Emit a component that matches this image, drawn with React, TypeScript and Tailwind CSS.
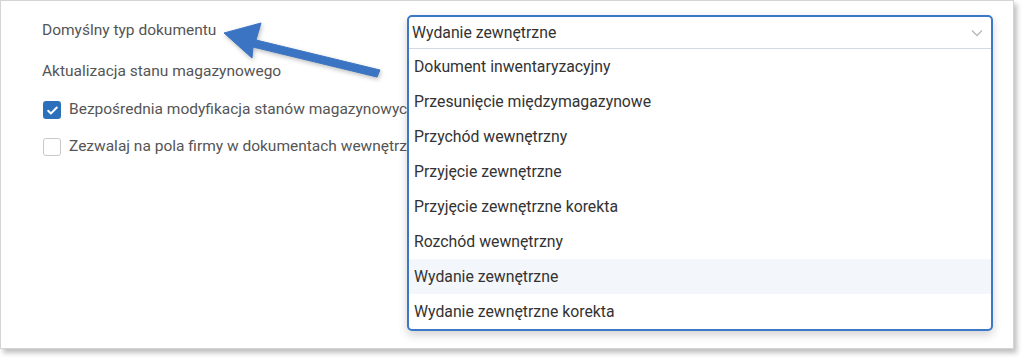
import React from "react";

const options = [
  "Dokument inwentaryzacyjny",
  "Przesunięcie międzymagazynowe",
  "Przychód wewnętrzny",
  "Przyjęcie zewnętrzne",
  "Przyjęcie zewnętrzne korekta",
  "Rozchód wewnętrzny",
  "Wydanie zewnętrzne",
  "Wydanie zewnętrzne korekta",
];

const Checkbox = ({ checked }: { checked?: boolean }) =>
  checked ? (
    <span className="w-[18px] h-[18px] rounded-[3px] bg-[#2c6fbb] flex items-center justify-center shrink-0">
      <svg width="13" height="13" viewBox="0 0 24 24" fill="none" stroke="white" strokeWidth="3.5" strokeLinecap="round" strokeLinejoin="round">
        <path d="M4 12.5l5 5L20 6.5" />
      </svg>
    </span>
  ) : (
    <span className="w-[18px] h-[18px] rounded-[3px] border border-[#c8c8c8] bg-white shrink-0" />
  );

export default function App() {
  return (
    <div className="w-[1024px] h-[358px] bg-white font-['Roboto',sans-serif]">
      <div className="relative w-[1014px] h-[349px] border border-[#d4d4d4] bg-white shadow-[3px_4px_5px_rgba(0,0,0,0.25)] flex pt-[14px]">
        <div className="w-[406px] pl-[41px] pt-[5px] flex flex-col text-[15.5px] text-[#555]">
          <div className="h-[20px] leading-[20px]">Domyślny typ dokumentu</div>
          <div className="h-[20px] leading-[20px] mt-[21px]">Aktualizacja stanu magazynowego</div>
          <div className="flex items-center gap-[8px] mt-[19px] h-[20px] whitespace-nowrap pl-[1px]">
            <Checkbox checked />
            <span>Bezpośrednia modyfikacja stanów magazynowych</span>
          </div>
          <div className="flex items-center gap-[8px] mt-[17px] h-[20px] whitespace-nowrap pl-[1px]">
            <Checkbox />
            <span>Zezwalaj na pola firmy w dokumentach wewnętrznych</span>
          </div>
        </div>

        <div className="relative z-10 w-[586px] h-[316px] border-2 border-[#3b78c8] rounded-[5px] bg-white shadow-[0_4px_10px_rgba(0,0,0,0.18)] flex flex-col overflow-hidden text-[15.8px] text-[#333]">
          <div className="h-[32px] flex items-center justify-between pl-[3px] pr-[8px] border-b border-[#cfd8e3]">
            <span>Wydanie zewnętrzne</span>
            <svg width="12" height="8" viewBox="0 0 12 8" fill="none" stroke="#b8b8b8" strokeWidth="1.3">
              <path d="M1 1.5l5 5 5-5" />
            </svg>
          </div>
          {options.map((o) => (
            <div
              key={o}
              className={`h-[35px] flex items-center pl-[5px] ${o === "Wydanie zewnętrzne" ? "bg-[#f3f6fa]" : ""}`}
            >
              {o}
            </div>
          ))}
        </div>

        <svg className="absolute left-[215px] top-[14px] z-20 drop-shadow-[1px_2px_2px_rgba(0,0,0,0.25)]" width="175" height="70" viewBox="215 14 175 70">
          <polygon
            points="223,32 260,22 255,39 379,69 376,76 252,46 251,57"
            fill="#3a74c2"
            stroke="#3a74c2"
            strokeLinejoin="round"
            strokeWidth="1"
          />
        </svg>
      </div>
    </div>
  );
}
